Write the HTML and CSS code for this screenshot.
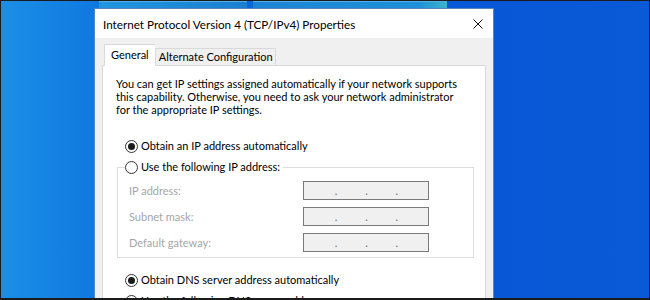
FILE: index.html
```html
<!DOCTYPE html>
<html lang="en">
<head>
    <meta charset="UTF-8">
    <title>Internet Protocol Version 4 (TCP/IPv4) Properties</title>
    <link rel="stylesheet" href="styles.css">
</head>
<body>

    <div class="desktop">
        <div class="back-window">
            <span class="pane pane-left"></span>
            <span class="pane pane-right"></span>
        </div>

        <div class="dialog">
            <div class="titlebar">
                <span class="title">Internet Protocol Version 4 (TCP/IPv4) Properties</span>
                <svg class="close" width="10" height="10" viewBox="0 0 10 10">
                    <path d="M0.5 0.5 L9.5 9.5 M9.5 0.5 L0.5 9.5" stroke="#111" stroke-width="1" fill="none"/>
                </svg>
            </div>

            <div class="dialog-body">
                <div class="tabs">
                    <div class="tab active">General</div>
                    <div class="tab">Alternate Configuration</div>
                </div>

                <div class="panel">
                    <p class="intro">You can get IP settings assigned automatically if your network supports<br>
                    this capability. Otherwise, you need to ask your network administrator<br>
                    for the appropriate IP settings.</p>

                    <div class="radio checked"><span class="circle"></span>Obtain an IP address automatically</div>

                    <fieldset class="group">
                        <legend><div class="radio"><span class="circle"></span>Use the following IP address:</div></legend>
                        <div class="field">
                            <span class="label">IP address:</span>
                            <div class="ip"><i>.</i><i>.</i><i>.</i></div>
                        </div>
                        <div class="field">
                            <span class="label">Subnet mask:</span>
                            <div class="ip"><i>.</i><i>.</i><i>.</i></div>
                        </div>
                        <div class="field">
                            <span class="label">Default gateway:</span>
                            <div class="ip"><i>.</i><i>.</i><i>.</i></div>
                        </div>
                    </fieldset>

                    <div class="radio checked dns"><span class="circle"></span>Obtain DNS server address automatically</div>
                    <div class="radio dns-manual"><span class="circle"></span>Use the following DNS server addresses:</div>
                </div>
            </div>
        </div>
    </div>

</body>
</html>
```

FILE: styles.css
```css
* {
    margin: 0;
    padding: 0;
    box-sizing: border-box;
}

body {
    width: 650px;
    height: 300px;
    overflow: hidden;
    font-family: Lato, "Noto Sans", sans-serif;
    font-size: 11px;
    color: #000;
    background: #111;
}

.desktop {
    position: relative;
    width: 650px;
    height: 300px;
    padding: 7px 0 0 93px;
    overflow: hidden;
    border: 1px solid #1b1b1b;
    border-bottom-width: 2px;
    background: linear-gradient(90deg, #1b8fe6 0%, #0f78e0 15%, #0a62dc 45%, #0757d6 75%, #0a5ad8 100%);
}

/* window peeking out behind the dialog */
.back-window {
    position: absolute;
    top: 0;
    left: 98px;
    width: 348px;
    height: 20px;
    display: flex;
    gap: 6px;
}

.pane {
    height: 100%;
    border-top: 1px solid #4fb0ea;
}

.pane-left {
    width: 148px;
    background: linear-gradient(90deg, #2096e0, #1b7fd0);
}

.pane-right {
    flex: 1;
    background: linear-gradient(90deg, #1d84d4, #1e8fd8 85%, #3bb3c8);
}

.dialog {
    position: relative;
    width: 400px;
    height: 310px;
    border: 1px solid #5b86bb;
    background: #f0f0f0;
}

.titlebar {
    height: 29px;
    background: #fff;
    display: flex;
    align-items: center;
    justify-content: space-between;
    padding: 0 10px 0 8px;
    font-size: 11.7px;
}

.dialog-body {
    padding: 6px 7px 0;
}

.tabs {
    display: flex;
    align-items: flex-end;
    margin-left: 2px;
    height: 21px;
}

.tab {
    height: 17px;
    padding: 0 2px 0 3px;
    line-height: 16px;
    border: 1px solid #d9d9d9;
    border-bottom: none;
    background: #f0f0f0;
}

.tab.active {
    height: 22px;
    padding: 0 6px;
    line-height: 20px;
    background: #fff;
    margin-bottom: -1px;
    position: relative;
    z-index: 1;
    border-right: none;
}

.panel {
    height: 260px;
    background: #fff;
    border: 1px solid #d9d9d9;
    padding: 11px 10px 0 13px;
}

.intro {
    line-height: 13px;
    white-space: nowrap;
}

.radio {
    display: flex;
    align-items: center;
    gap: 3px;
    height: 14px;
    line-height: 14px;
    margin-left: 9px;
    white-space: nowrap;
}

.panel > .radio:first-of-type {
    margin-top: 23px;
}

.circle {
    width: 13px;
    height: 13px;
    border: 1px solid #333;
    border-radius: 50%;
    display: flex;
    align-items: center;
    justify-content: center;
    background: #fff;
}

.radio.checked .circle::after {
    content: "";
    width: 7px;
    height: 7px;
    border-radius: 50%;
    background: #1a1a1a;
}

.group {
    margin: 7px 0 0 1px;
    width: 357px;
    border: 1px solid #dcdcdc;
    padding: 0 0 5px 7px;
}

.group legend {
    padding-right: 3px;
}

.group legend .radio {
    margin-left: 0;
}

.field {
    display: flex;
    align-items: center;
    height: 19px;
    margin: 7px 0 0 4px;
}

.group legend + .field {
    margin-top: 7px;
}

.label {
    width: 174px;
    color: #a6a6a6;
}

.ip {
    width: 126px;
    height: 19px;
    border: 1px solid #7a7a7a;
    background: #f0f0f0;
    display: flex;
    justify-content: space-around;
    padding: 0 16px 0 17px;
    color: #6d6d6d;
    font-size: 11px;
    line-height: 17px;
}

.ip i {
    font-style: normal;
}

.dns {
    margin-top: 15px;
}

.dns-manual {
    margin-top: 7px;
}
```
